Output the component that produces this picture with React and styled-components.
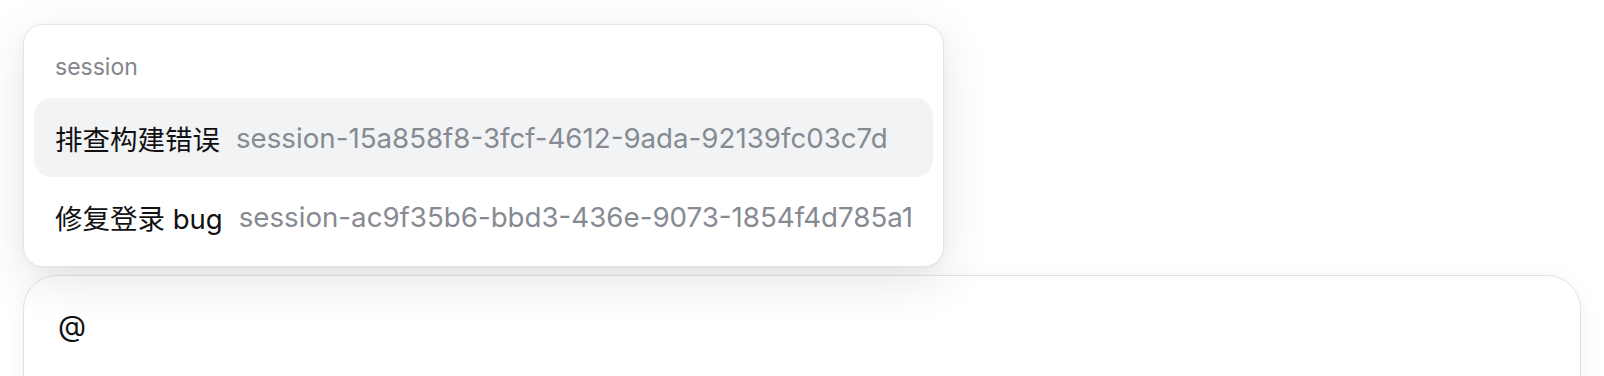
import React from "react";
import styled, { createGlobalStyle } from "styled-components";

const Global = createGlobalStyle`
  html, body { margin: 0; padding: 0; background: #ffffff; overflow: hidden; }
  body { font-family: Inter, "Noto Sans CJK SC", sans-serif; -webkit-font-smoothing: antialiased; }
`;

const Page = styled.div`
  display: flex;
  flex-direction: column;
  gap: 8px;
  padding: 24px 23px 0 23px;
`;

const Popup = styled.div`
  position: relative;
  z-index: 2;
  width: 921px;
  box-sizing: border-box;
  background: #ffffff;
  border: 1px solid #e4e4e7;
  border-radius: 20px;
  padding: 10px;
  box-shadow: 0 14px 50px rgba(0, 0, 0, 0.1), 0 2px 8px rgba(0, 0, 0, 0.04);
  display: flex;
  flex-direction: column;
`;

const GroupLabel = styled.div`
  height: 63px;
  display: flex;
  align-items: center;
  padding: 0 21px;
  font-size: 23px;
  color: #85868c;
`;

const Item = styled.div`
  height: 79px;
  display: flex;
  align-items: center;
  gap: 16px;
  padding: 0 21px;
  border-radius: 18px;
  background: ${(p) => (p.$active ? "#f2f3f5" : "transparent")};
  white-space: nowrap;
`;

const Title = styled.span`
  font-size: 27.5px;
  color: #111113;
`;

const SessionId = styled.span`
  font-size: 27.7px;
  color: #868a92;
`;

const Composer = styled.div`
  position: relative;
  z-index: 1;
  height: 240px;
  box-sizing: border-box;
  background: #ffffff;
  border: 1px solid #e2e2e5;
  border-radius: 34px;
  padding: 28px 34px;
  box-shadow: 0 4px 24px rgba(0, 0, 0, 0.05);
  font-size: 29px;
  color: #111113;
  line-height: 1.5;
`;

const sessions = [
  { title: "排查构建错误", id: "session-15a858f8-3fcf-4612-9ada-92139fc03c7d", active: true },
  { title: "修复登录 bug", id: "session-ac9f35b6-bbd3-436e-9073-1854f4d785a1", active: false },
];

export default function App() {
  return (
    <>
      <Global />
      <Page>
        <Popup>
          <GroupLabel>session</GroupLabel>
          {sessions.map((s) => (
            <Item key={s.id} $active={s.active}>
              <Title>{s.title}</Title>
              <SessionId>{s.id}</SessionId>
            </Item>
          ))}
        </Popup>
        <Composer>@</Composer>
      </Page>
    </>
  );
}
